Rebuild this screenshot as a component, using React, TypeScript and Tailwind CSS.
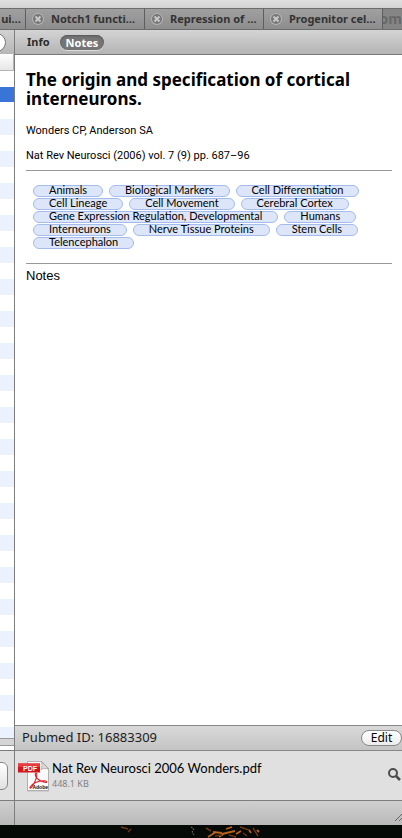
import { clsx } from "clsx";

const TABS = ["Notch1 functi…", "Repression of …", "Progenitor cel…"];

const KEYWORDS = [
  ["Animals", "Biological Markers", "Cell Differentiation"],
  ["Cell Lineage", "Cell Movement", "Cerebral Cortex"],
  ["Gene Expression Regulation, Developmental", "Humans"],
  ["Interneurons", "Nerve Tissue Proteins", "Stem Cells"],
  ["Telencephalon"],
];

const CloseIcon = () => (
  <svg viewBox="0 0 12 12" className="size-3 shrink-0">
    <circle cx="6" cy="6" r="6" fill="#b4b4b4" />
    <circle cx="6" cy="6" r="5" fill="#777" />
    <path d="M3.500 3.500l5 5M8.500 3.500l-5 5" stroke="#c8c8c8" strokeWidth="2" />
  </svg>
);

const PdfIcon = () => (
  <svg viewBox="0 0 32 32" className="h-8 w-8 shrink-0">
    <path d="M9 1.500H24l7 7V31.500H9z" fill="#8a8a8a" opacity="0.45" />
    <path d="M9.500 1.500H23.500L30.500 9V30.500H9.500z" fill="#fafafa" stroke="#b0b0b0" />
    <path d="M23.500 1.500L30.500 9Q26 7.500 23 9.500Q25 5.500 23.500 1.500z" fill="#dcdcdc" stroke="#999" strokeWidth="0.7" />
    <path
      d="M17.500 13.500C16.500 16 19.500 21 27.500 22.500C29.500 22.800 29 20.500 25.500 20.700C20.500 21 15.500 22.500 12.500 26.500C11 29 13 28.500 14.500 26C17 22 19 17 18.800 14C18.600 12.800 17.900 12.800 17.500 13.500z"
      fill="none"
      stroke="#e2222b"
      strokeWidth="1.1"
    />
    <path d="M0 3.500H22V12.500H0z" fill="#d4141c" />
    <path d="M0 3.500H22V7H0z" fill="#e63c3e" />
    <text x="5" y="10.500" fontSize="7" fontWeight="bold" fill="#fff" fontFamily="Liberation Sans, sans-serif">
      PDF
    </text>
    <text x="30" y="29" textAnchor="end" fontSize="5" fontWeight="bold" fill="#111" fontFamily="Liberation Sans, sans-serif">
      Adobe
    </text>
  </svg>
);

const TabBar = () => (
  <nav className="flex h-[22px] shrink-0 overflow-hidden border-y border-[#6c6c6c] bg-linear-to-b from-[#a0a0a0] to-[#8d8d8d] text-[11px] font-bold text-[#333]">
    <button className="flex w-[26px] shrink-0 items-center justify-end border-r border-[#5e5e5e] pr-1">ui…</button>
    {TABS.map((tab) => (
      <button
        key={tab}
        className="flex w-[119px] shrink-0 items-center gap-[7px] border-r border-[#5e5e5e] pl-1.5 whitespace-nowrap"
      >
        <CloseIcon />
        {tab}
      </button>
    ))}
    <span className="flex min-w-0 flex-1 items-center justify-end overflow-hidden bg-[#858585] text-sm text-[#686868]">
      om
    </span>
  </nav>
);

const Library = () => (
  <aside className="flex w-[15px] shrink-0 flex-col overflow-hidden border-r border-[#7d7d7d]">
    <div className="flex h-6 shrink-0 items-center justify-end bg-linear-to-b from-[#d2d2d2] to-[#b6b6b6] pr-2">
      <input aria-label="Search" className="h-[19px] w-10 shrink-0 rounded-full border border-[#777] bg-white" />
    </div>
    <div className="h-[17px] shrink-0 border-r border-b border-[#b4b4b4] bg-linear-to-b from-white to-[#e6e6e6]" />
    <div className="min-h-0 flex-1 overflow-hidden">
      {Array.from({ length: 42 }, (_, i) => (
        <div
          key={i}
          className={clsx("h-4", i === 1 ? "border-b border-white bg-[#3875d7]" : i % 2 ? "bg-[#ebf2fe]" : "bg-white")}
        />
      ))}
    </div>
    <div className="h-2 shrink-0 border-y border-[#999] bg-[#d5d5d5]" />
    <div className="h-1 shrink-0 bg-white" />
    <div className="flex h-[51px] shrink-0 items-center justify-end border-y border-[#7d7d7d] bg-[#e0e0e0] pr-1.5">
      <button
        aria-label="Actions"
        className="h-7 w-10 shrink-0 rounded-md border border-[#888] bg-linear-to-b from-white to-[#e2e2e2]"
      />
    </div>
    <div className="h-6 shrink-0 bg-linear-to-b from-[#cfcfcf] to-[#b9b9b9]" />
  </aside>
);

const Details = () => (
  <main className="flex min-w-0 flex-1 flex-col">
    <div className="flex h-[25px] shrink-0 items-center border-b border-[#777] bg-linear-to-b from-[#d4d4d4] to-[#b4b4b4] pl-3 text-[11px] font-bold">
      <button className="text-[#2c2c2c]">Info</button>
      <button className="ml-2.5 h-[15px] rounded-full bg-[#757575] px-1.5 leading-[15px] text-white shadow-[inset_0_1px_2px_#555,0_1px_0_#ddd]">
        Notes
      </button>
    </div>

    <div className="flex min-h-0 flex-1 flex-col overflow-hidden pr-2.5 pl-[11px]">
      <h1 className="mt-[15px] text-[17px] leading-[19px] font-bold">
        The origin and specification of cortical interneurons.
      </h1>
      <p className="mt-[15px] font-[Roboto,sans-serif] text-[11px] leading-4">Wonders CP, Anderson SA</p>
      <p className="mt-[9px] font-[Roboto,sans-serif] text-[11px] leading-4">
        Nat Rev Neurosci (2006) vol. 7 (9) pp. 687–96
      </p>
      <hr className="mt-1.5 border-[#999]" />
      <div className="mt-[14px] flex flex-col gap-px pl-[7px] font-[Lato,sans-serif] text-[11px]">
        {KEYWORDS.map((row) => (
          <div key={row[0]} className="flex gap-1.5">
            {row.map((word) => (
              <a
                key={word}
                href="#"
                className="h-3 rounded-full border border-[#a3bcec] bg-[#dde6f8] px-[15px] leading-[8px] whitespace-nowrap"
              >
                {word}
              </a>
            ))}
          </div>
        ))}
      </div>
      <hr className="mt-[14px] border-[#999]" />
      <label htmlFor="notes" className="mt-1 font-['Liberation_Sans',sans-serif] text-[13px] leading-4">
        Notes
      </label>
      <textarea id="notes" className="min-h-0 flex-1 resize-none outline-none" />
    </div>

    <div className="flex h-[26px] shrink-0 items-center justify-between border-y border-[#888] bg-linear-to-b from-[#d9d9d9] to-[#c4c4c4] pl-[7px] text-[13px] text-[#1c1c1c]">
      <span>Pubmed ID: 16883309</span>
      <button className="h-4 w-[41px] rounded-full border border-[#888] bg-linear-to-b from-white to-[#ececec] text-xs leading-[14px] text-black">
        Edit
      </button>
    </div>
    <div className="flex h-[50px] shrink-0 items-center border-b border-[#7d7d7d] bg-[#e0e0e0] pl-[3px]">
      <PdfIcon />
      <div className="ml-0.5 flex-1 pb-0.5">
        <p className="font-[Lato,sans-serif] text-[13px] leading-4">Nat Rev Neurosci 2006 Wonders.pdf</p>
        <p className="mt-0.5 text-[9px] leading-3 text-[#808080]">448.1 KB</p>
      </div>
      <button aria-label="Preview" className="mb-1">
        <svg viewBox="0 0 14 14" className="size-3.5" fill="none" stroke="#4c4c4c">
          <circle cx="5" cy="6" r="4" strokeWidth="2" />
          <path d="M8 9l4 4" strokeWidth="2.500" />
        </svg>
      </button>
    </div>
    <div className="flex h-6 shrink-0 items-end justify-end bg-linear-to-b from-[#cfcfcf] to-[#b9b9b9] pb-1">
      <svg viewBox="0 0 7 7" className="size-[7px]" stroke="#666">
        <path d="M0 7l7-7M4 7l3-3" />
      </svg>
    </div>
  </main>
);

const Desktop = () => (
  <div className="h-[13px] shrink-0 overflow-hidden bg-[#050a06]">
    <svg className="h-[13px] w-full" fill="none">
      <path
        d="M208 12l8-5M213 7l9 1M219 12l6-4M222 9l13-3M226 4l6-2M236 9l5-3M249 5l2 3M257 5l2 2"
        stroke="#b8611a"
        strokeWidth="1.800"
      />
      <path
        d="M121 2l7 2M131 4l-3 3M206 3l5 3M215 11l7-1M229 10l7 2M240 2l9 3M243 8l4 3M253 3l5 8"
        stroke="#6b3610"
        strokeWidth="1.500"
      />
      <path d="M191 2l3 2l-2 3l2 3" stroke="#6f7470" strokeDasharray="2 1" />
    </svg>
  </div>
);

const App = () => {
  return (
    <div className="flex h-screen flex-col overflow-hidden bg-white font-['Noto_Sans',sans-serif] text-black">
      <div className="h-2 shrink-0 bg-linear-to-b from-[#e0e0e0] to-[#d2d2d2]" />
      <TabBar />
      <div className="flex min-h-0 flex-1">
        <Library />
        <Details />
      </div>
      <Desktop />
    </div>
  );
};

export default App;
